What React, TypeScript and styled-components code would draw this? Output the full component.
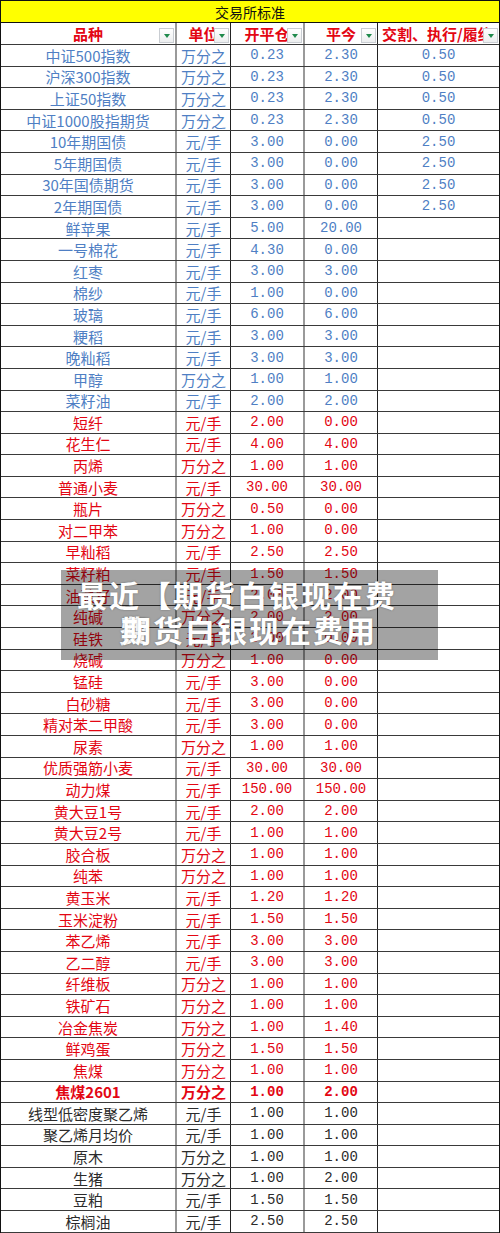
import React from 'react'
import styled, { createGlobalStyle, css } from 'styled-components'

type Tone = 'blue' | 'red' | 'black'
type Line = 'soft' | 'hard' | 'none'

const GlobalStyle = createGlobalStyle`
  * { box-sizing: border-box; }
  body {
    margin: 0;
    background: #fff;
    font-family: "Noto Sans CJK SC", "Noto Sans", sans-serif;
  }
`

const toneColor: Record<Tone, string> = {
  blue: '#4f7fc4',
  red: '#e30613',
  black: '#2b2b2b',
}

// [品种, 单位, 开平仓, 平今, 交割/执行/履约]
const rows: [string, string, string, string, string][] = [
  ['中证500指数', '万分之', '0.23', '2.30', '0.50'],
  ['沪深300指数', '万分之', '0.23', '2.30', '0.50'],
  ['上证50指数', '万分之', '0.23', '2.30', '0.50'],
  ['中证1000股指期货', '万分之', '0.23', '2.30', '0.50'],
  ['10年期国债', '元/手', '3.00', '0.00', '2.50'],
  ['5年期国债', '元/手', '3.00', '0.00', '2.50'],
  ['30年国债期货', '元/手', '3.00', '0.00', '2.50'],
  ['2年期国债', '元/手', '3.00', '0.00', '2.50'],
  ['鲜苹果', '元/手', '5.00', '20.00', ''],
  ['一号棉花', '元/手', '4.30', '0.00', ''],
  ['红枣', '元/手', '3.00', '3.00', ''],
  ['棉纱', '元/手', '1.00', '0.00', ''],
  ['玻璃', '元/手', '6.00', '6.00', ''],
  ['粳稻', '元/手', '3.00', '3.00', ''],
  ['晚籼稻', '元/手', '3.00', '3.00', ''],
  ['甲醇', '万分之', '1.00', '1.00', ''],
  ['菜籽油', '元/手', '2.00', '2.00', ''],
  ['短纤', '元/手', '2.00', '0.00', ''],
  ['花生仁', '元/手', '4.00', '4.00', ''],
  ['丙烯', '万分之', '1.00', '1.00', ''],
  ['普通小麦', '元/手', '30.00', '30.00', ''],
  ['瓶片', '万分之', '0.50', '0.00', ''],
  ['对二甲苯', '万分之', '1.00', '0.00', ''],
  ['早籼稻', '元/手', '2.50', '2.50', ''],
  ['菜籽粕', '元/手', '1.50', '1.50', ''],
  ['油菜籽', '元/手', '2.00', '2.00', ''],
  ['纯碱', '万分之', '2.00', '2.00', ''],
  ['硅铁', '元/手', '3.00', '0.00', ''],
  ['烧碱', '万分之', '1.00', '0.00', ''],
  ['锰硅', '元/手', '3.00', '0.00', ''],
  ['白砂糖', '元/手', '3.00', '0.00', ''],
  ['精对苯二甲酸', '元/手', '3.00', '0.00', ''],
  ['尿素', '万分之', '1.00', '1.00', ''],
  ['优质强筋小麦', '元/手', '30.00', '30.00', ''],
  ['动力煤', '元/手', '150.00', '150.00', ''],
  ['黄大豆1号', '元/手', '2.00', '2.00', ''],
  ['黄大豆2号', '元/手', '1.00', '1.00', ''],
  ['胶合板', '万分之', '1.00', '1.00', ''],
  ['纯苯', '万分之', '1.00', '1.00', ''],
  ['黄玉米', '元/手', '1.20', '1.20', ''],
  ['玉米淀粉', '元/手', '1.50', '1.50', ''],
  ['苯乙烯', '元/手', '3.00', '3.00', ''],
  ['乙二醇', '元/手', '3.00', '3.00', ''],
  ['纤维板', '万分之', '1.00', '1.00', ''],
  ['铁矿石', '万分之', '1.00', '1.00', ''],
  ['冶金焦炭', '万分之', '1.00', '1.40', ''],
  ['鲜鸡蛋', '万分之', '1.50', '1.50', ''],
  ['焦煤', '万分之', '1.00', '1.00', ''],
  ['焦煤2601', '万分之', '1.00', '2.00', ''],
  ['线型低密度聚乙烯', '元/手', '1.00', '1.00', ''],
  ['聚乙烯月均价', '元/手', '1.00', '1.00', ''],
  ['原木', '万分之', '1.00', '1.00', ''],
  ['生猪', '万分之', '1.00', '2.00', ''],
  ['豆粕', '元/手', '1.50', '1.50', ''],
  ['棕榈油', '元/手', '2.50', '2.50', ''],
]

const toneOf = (i: number): Tone => (i < 17 ? 'blue' : i < 49 ? 'red' : 'black')

const columnLines: Line[] = ['soft', 'hard', 'soft', 'hard', 'none']

const Page = styled.div`
  position: relative;
  width: 500px;
`

const Sheet = styled.div`
  display: flex;
  flex-direction: column;
  border: 1px solid #111;
  border-bottom: none;
`

const TitleRow = styled.div`
  height: 22px;
  display: flex;
  align-items: center;
  justify-content: center;
  background: #ffff00;
  border-bottom: 1px solid #111;
  font-size: 14px;
  color: #111;
`

const Row = styled.div<{ $h: number }>`
  display: grid;
  grid-template-columns: 176px 54px 74px 73px 1fr;
  height: ${p => p.$h}px;
  border-bottom: 1px solid #3a3a3a;
`

const lineStyle = (line: Line) => {
  if (line === 'soft') return css`border-right: 2px solid #9a9a9a;`
  if (line === 'hard') return css`border-right: 1px solid #222;`
  return css``
}

const Cell = styled.div<{ $line: Line; $tone: Tone; $num?: boolean; $bold?: boolean }>`
  display: flex;
  align-items: center;
  justify-content: center;
  overflow: hidden;
  white-space: nowrap;
  ${p => lineStyle(p.$line)}
  color: ${p => toneColor[p.$tone]};
  font-weight: ${p => (p.$bold ? 700 : 400)};
  ${p =>
    p.$num
      ? css`
          font-family: "Liberation Mono", "DejaVu Sans Mono", monospace;
          font-size: 14px;
        `
      : css`
          font-size: 15px;
        `}
`

const HeaderCell = styled.div<{ $line: Line; $left?: boolean }>`
  position: relative;
  display: flex;
  align-items: center;
  justify-content: ${p => (p.$left ? 'flex-start' : 'center')};
  padding-left: ${p => (p.$left ? '4px' : '0')};
  overflow: hidden;
  white-space: nowrap;
  ${p => lineStyle(p.$line)}
  color: #e30613;
  font-size: 15px;
  font-weight: 700;
`

const FilterButton = styled.span`
  position: absolute;
  right: 1px;
  bottom: 1px;
  width: 15px;
  height: 15px;
  display: flex;
  align-items: center;
  justify-content: center;
  background: linear-gradient(#ffffff, #eceeef);
  border: 1px solid #c9cdd2;
`

const Caret = styled.span`
  width: 0;
  height: 0;
  border-left: 3px solid transparent;
  border-right: 3px solid transparent;
  border-top: 4px solid #1f8a4c;
`

const Banner = styled.div`
  position: absolute;
  left: 61px;
  top: 570px;
  width: 377px;
  height: 90px;
  background: rgba(0, 0, 0, 0.36);
  padding-top: 7px;
  display: flex;
  flex-direction: column;
`

const BannerLine = styled.div<{ $indent: number }>`
  padding-left: ${p => p.$indent}px;
  height: 35px;
  line-height: 35px;
  font-size: 30px;
  font-weight: 700;
  letter-spacing: 2px;
  color: #fff;
  white-space: nowrap;
  text-shadow: 0 0 2px rgba(0, 0, 0, 0.35);
`

const Ghost = styled.span`
  display: inline-block;
  margin-right: -30px;
`

const headers = ['品种', '单位', '开平仓', '平今', '交割、执行/履约']

export default function App() {
  return (
    <Page>
      <GlobalStyle />
      <Sheet>
        <TitleRow>交易所标准</TitleRow>
        <Row $h={22}>
          {headers.map((h, i) => (
            <HeaderCell key={h} $line={columnLines[i]} $left={i === 4}>
              {h}
              <FilterButton>
                <Caret />
              </FilterButton>
            </HeaderCell>
          ))}
        </Row>
        {rows.map((r, i) => {
          const tone = toneOf(i)
          const bold = r[0] === '焦煤2601'
          return (
            <Row key={r[0]} $h={21.6}>
              {r.map((v, j) => (
                <Cell key={j} $line={columnLines[j]} $tone={tone} $num={j >= 2} $bold={bold}>
                  {v}
                </Cell>
              ))}
            </Row>
          )
        })}
      </Sheet>
      <Banner>
        <BannerLine $indent={16}>最近【期货白银现在费</BannerLine>
        <BannerLine $indent={58}>
          <Ghost>费</Ghost>期货白银现在费用
        </BannerLine>
      </Banner>
    </Page>
  )
}
